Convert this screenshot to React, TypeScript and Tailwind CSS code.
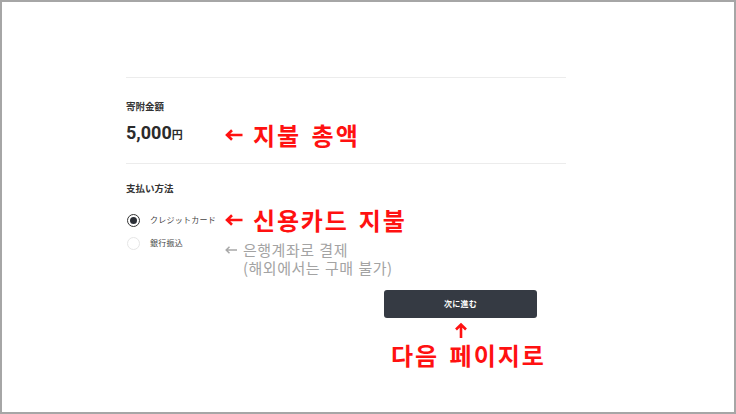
import React from "react";

const jp = { fontFamily: '"Noto Sans CJK JP", "Noto Sans", sans-serif' };
const kr = { fontFamily: '"Noto Sans CJK KR", "Noto Sans", sans-serif', wordSpacing: "3px" };
const krGray = { fontFamily: '"Noto Sans CJK KR", "Noto Sans", sans-serif', wordSpacing: "1px" };
const num = { fontFamily: 'Roboto, "Noto Sans", sans-serif' };

const RED = "#ff1111";

function RedLeftArrow() {
  return (
    <svg width="18" height="12" viewBox="0 0 18 12" className="shrink-0">
      <path d="M17.5 6H2.5M7 1.2L2 6L7 10.8" stroke={RED} strokeWidth="2.6" fill="none" strokeLinejoin="miter" />
    </svg>
  );
}

function GrayLeftArrow() {
  return (
    <svg width="12" height="8" viewBox="0 0 12 8" className="shrink-0">
      <path d="M12 4H1.5M4.5 0.8L1.2 4L4.5 7.2" stroke="#a8a8a8" strokeWidth="1.5" fill="none" />
    </svg>
  );
}

export default function App() {
  return (
    <div className="w-[736px] h-[414px] border-2 border-[#a6a6a6] bg-white overflow-hidden">
      <div className="ml-[124px] w-[440px] pt-[75px]">
        <div className="h-px bg-[#ececec]" />
        <div style={jp} className="mt-[21px] text-[9.5px] leading-[14px] font-bold text-[#333]">
          寄附金額
        </div>
        <div className="mt-[5px] h-[30px] flex items-center">
          <div className="w-[99px] flex items-baseline text-[#2b2b2b]">
            <span style={num} className="text-[18px] font-bold leading-[30px]">5,000</span>
            <span style={jp} className="text-[11px] font-bold">円</span>
          </div>
          <div className="flex items-center pt-[4px]">
            <div className="w-[28px] flex items-center">
              <RedLeftArrow />
            </div>
            <span style={kr} className="text-[24px] font-bold leading-[30px] tracking-[2px] text-[#ff1111]">
              지불 총액
            </span>
          </div>
        </div>
        <div className="mt-[15px] h-px bg-[#ececec]" />
        <div style={jp} className="mt-[17px] text-[9.5px] leading-[14px] font-bold text-[#333]">
          支払い方法
        </div>
        <div className="mt-[13px] h-[24px] flex items-center">
          <div className="w-[99px] flex items-center">
            <span className="ml-px w-[13px] h-[13px] rounded-full border-[1.5px] border-[#333] flex items-center justify-center">
              <span className="w-[7px] h-[7px] rounded-full bg-[#2b2f36]" />
            </span>
            <span style={jp} className="ml-[10px] text-[8px] tracking-[0.25px] text-[#444]">
              クレジットカード
            </span>
          </div>
          <div className="flex items-center">
            <div className="w-[28px] flex items-center">
              <RedLeftArrow />
            </div>
            <span style={kr} className="text-[24px] font-bold leading-[24px] tracking-[1.8px] text-[#ff1111]">
              신용카드 지불
            </span>
          </div>
        </div>
        <div className="mt-[3px] flex items-start">
          <div className="w-[99px] h-[16px] flex items-center">
            <span className="ml-px w-[13px] h-[13px] rounded-full border border-[#e6e6e6]" />
            <span style={jp} className="ml-[10px] text-[8px] tracking-[0.25px] text-[#444]">
              銀行振込
            </span>
          </div>
          <div style={krGray} className="mt-[6px] text-[15px] leading-[18px] tracking-[0.5px] text-[#a3a3a3]">
            <div className="flex items-center">
              <div className="w-[18px] flex items-center">
                <GrayLeftArrow />
              </div>
              <span>은행계좌로 결제</span>
            </div>
            <div className="pl-[18px]">(해외에서는 구매 불가)</div>
          </div>
        </div>
        <div className="mt-[13px] ml-[258px] w-[153px] h-[28px] rounded-[3px] bg-[#353a43] flex items-center justify-center">
          <span style={jp} className="text-[8px] font-bold text-white tracking-[0.25px]">次に進む</span>
        </div>
        <div className="ml-[258px] w-[170px] flex flex-col items-start">
          <div className="ml-[70px] mt-[4px] w-[14px] h-[18px] flex justify-center">
            <svg width="14" height="16" viewBox="0 0 14 16">
              <path d="M7 16V2.5M2 7.5L7 2.5L12 7.5" stroke={RED} strokeWidth="2.6" fill="none" strokeLinejoin="miter" />
            </svg>
          </div>
          <div style={kr} className="ml-[7px] mt-[2px] text-[24px] font-bold leading-[26px] tracking-[2px] text-[#ff1111]">
            다음 페이지로
          </div>
        </div>
      </div>
    </div>
  );
}
